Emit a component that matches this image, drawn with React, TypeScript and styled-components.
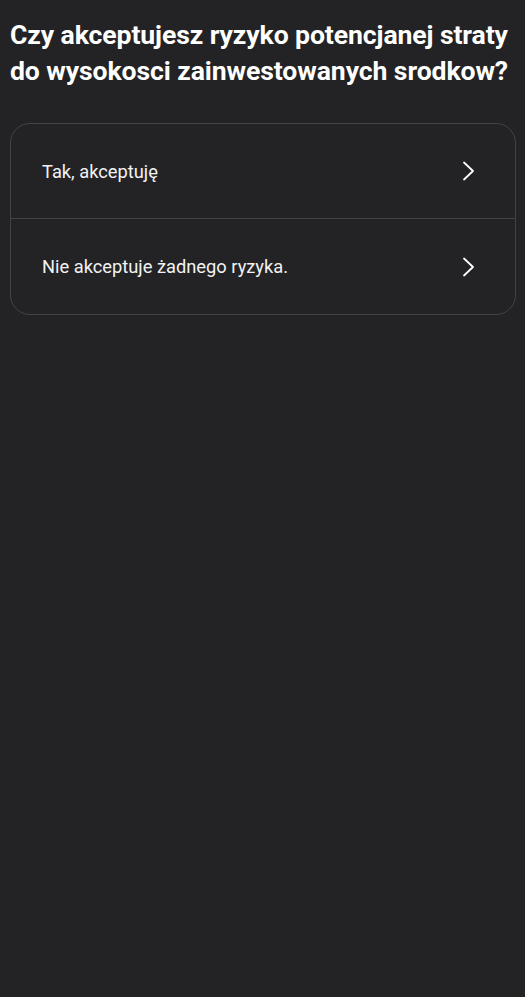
import styled, { createGlobalStyle } from "styled-components";

const GlobalStyle = createGlobalStyle`
    html, body {
        margin: 0;
        padding: 0;
        background: #232325;
    }
    body {
        font-family: Roboto, "Noto Sans", sans-serif;
        color: #ffffff;
    }
`;

const Page = styled.div`
    min-height: 997px;
    padding: 17px 9px 0 10px;
    box-sizing: border-box;
`;

const Question = styled.h1`
    margin: 0;
    font-size: 26.6px;
    font-weight: 700;
    line-height: 36px;
    letter-spacing: -0.1px;
    color: #ffffff;
`;

const OptionsCard = styled.div`
    margin-top: 34px;
    border: 1px solid #434346;
    border-radius: 20px;
    overflow: hidden;
`;

const OptionRow = styled.button<{ $last?: boolean }>`
    display: flex;
    align-items: center;
    justify-content: space-between;
    width: 100%;
    height: 95px;
    padding: 0 39px 0 31px;
    box-sizing: border-box;
    background: transparent;
    border: none;
    border-bottom: ${(p) => (p.$last ? "none" : "1px solid #434346")};
    color: #f2f2f2;
    font-family: Roboto, "Noto Sans", sans-serif;
    font-size: 18.3px;
    text-align: left;
    cursor: pointer;
`;

const Chevron = () => (
    <svg width="14" height="22" viewBox="0 0 14 22" fill="none">
        <path d="M2 2.5L11 11L2 19.5" stroke="#ffffff" strokeWidth="1.8" strokeLinecap="round" strokeLinejoin="round" />
    </svg>
);

const options = ["Tak, akceptuję", "Nie akceptuje żadnego ryzyka."];

export default function App() {
    return (
        <>
            <GlobalStyle />
            <Page>
                <Question>Czy akceptujesz ryzyko potencjanej straty do wysokosci zainwestowanych srodkow?</Question>
                <OptionsCard>
                    {options.map((label, i) => (
                        <OptionRow key={label} $last={i === options.length - 1}>
                            <span>{label}</span>
                            <Chevron />
                        </OptionRow>
                    ))}
                </OptionsCard>
            </Page>
        </>
    );
}
